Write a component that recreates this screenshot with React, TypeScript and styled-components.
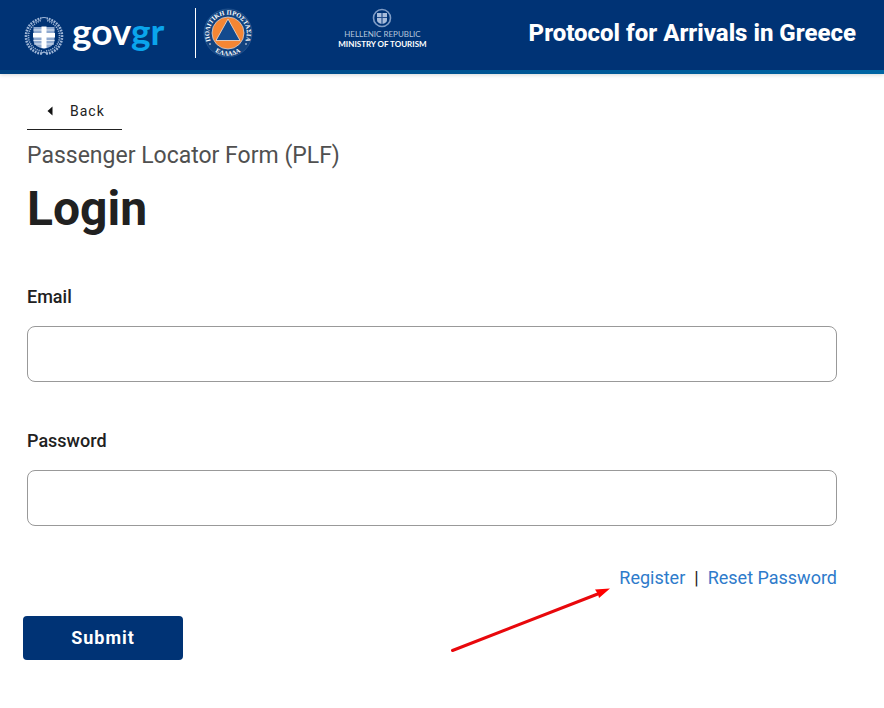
import React from "react";
import styled, { createGlobalStyle } from "styled-components";

const navy = "#003375";

const GlobalStyle = createGlobalStyle`
  *, *::before, *::after { box-sizing: border-box; }
  body {
    margin: 0;
    background: #fff;
    color: #212121;
    font-family: Roboto, "Liberation Sans", sans-serif;
  }
`;

const Header = styled.header`
  display: flex;
  align-items: flex-start;
  padding: 8px 28px 10px 24px;
  background: linear-gradient(90deg, #00417f, #0065a3) bottom / 100% 4px no-repeat ${navy};
  box-shadow: 0 1px 4px rgba(0, 0, 0, 0.16);
`;

const GovBrand = styled.a`
  display: flex;
  align-items: center;
  gap: 8px;
  height: 56px;
  color: #fff;
  text-decoration: none;
`;

const Wordmark = styled.span`
  padding-bottom: 10px;
  font: 700 37px/40px Lato, sans-serif;
`;

const WordmarkAccent = styled.span`
  color: #0aa5ec;
`;

const Divider = styled.span`
  width: 1px;
  height: 50px;
  margin: 0 7px 0 31px;
  background: #fff;
`;

const Ministry = styled.div`
  display: flex;
  flex-direction: column;
  align-items: center;
  margin-left: 85px;
  color: #fff;
  font: 400 8px/10px Lato, sans-serif;
  white-space: nowrap;
`;

const Republic = styled.span`
  color: #b4c4dc;
  line-height: 12px;
`;

const MinistryName = styled.strong`
  font-weight: 700;
  line-height: 8px;
`;

const SiteTitle = styled.div`
  margin-left: auto;
  color: #fff;
  font-size: 24px;
  font-weight: 800;
  line-height: 50px;
  white-space: nowrap;
`;

const Main = styled.main`
  padding: 20px 47px 48px 27px;
`;

const BackButton = styled.button`
  display: flex;
  align-items: center;
  gap: 17px;
  height: 36px;
  padding: 0 17px 2px 20px;
  border: 0;
  border-bottom: 1px solid #212121;
  background: none;
  color: #212121;
  font: 400 14px/20px Roboto, sans-serif;
  letter-spacing: 1px;
`;

const Caption = styled.p`
  margin: 10px 0 0;
  color: #505050;
  font-size: 23px;
  line-height: 32px;
`;

const Title = styled.h1`
  margin: 7px 0 44px;
  font-size: 48px;
  font-weight: 700;
  line-height: 60px;
`;

const Fields = styled.div`
  display: flex;
  flex-direction: column;
  gap: 45px;
  margin-bottom: 38px;
`;

const Field = styled.div`
  display: flex;
  flex-direction: column;
  gap: 16px;
`;

const Label = styled.label`
  font-size: 18px;
  font-weight: 500;
  line-height: 27px;
`;

const Input = styled.input`
  width: 100%;
  height: 56px;
  padding: 0 16px;
  border: 1px solid #999;
  border-radius: 8px;
  background: #fff;
  font: 400 18px/28px Roboto, sans-serif;
`;

const Links = styled.nav`
  position: relative;
  display: flex;
  justify-content: flex-end;
  gap: 9px;
  margin-bottom: 24px;
  font-size: 18px;
  line-height: 28px;
`;

const TextLink = styled.a`
  color: #2e7bcb;
  text-decoration: none;
`;

const Arrow = styled.svg`
  position: absolute;
  top: 20px;
  right: 225px;
`;

const Submit = styled.button`
  display: block;
  width: 160px;
  height: 44px;
  margin-left: -4px;
  border: 0;
  border-radius: 4px;
  background: ${navy};
  color: #fff;
  font: 700 18px/24px Roboto, sans-serif;
  letter-spacing: 1px;
`;

function Emblem() {
  return (
    <svg width="40" height="40" viewBox="0 0 40 40" aria-hidden="true">
      <g fill="none" stroke="#9db5d6">
        <path
          d="M18 37.500C8 37 2 29 2 20.500S7 5 17 2.500M22 37.500C32 37 38 29 38 20.500S33 5 23 2.500"
          strokeWidth="2.600"
          strokeDasharray="1.800 1"
        />
        <path
          d="M18 35C9.500 34 4.500 27.500 4.500 20.500S9 7.500 17 4.500M22 35c8.500-1 13.500-7.500 13.500-14.500S31 7.500 23 4.500"
          strokeWidth="1.600"
          strokeDasharray="1.200 1"
        />
        <path d="M16 2.500q4-2 8 0M16 38l4-2 4 2" strokeWidth="1.200" />
      </g>
      <path d="M9.500 11h21v14q0 5-10.500 8Q9.500 30 9.500 25z" fill="#8fa9cf" />
      <path d="M9.500 14h21M9.500 24.500h21M10 28h20" stroke="#dfe8f4" strokeWidth="1" />
      <path d="M17.500 10.500h5V17H31v4.500h-8.500V32h-5V21.500H9V17h8.500z" fill="#fff" />
    </svg>
  );
}

function SmallEmblem() {
  return (
    <svg width="20" height="20" viewBox="0 0 20 20" aria-hidden="true">
      <circle cx="10" cy="10" r="8.500" fill="none" stroke="#7f9cc5" strokeWidth="1.600" />
      <path d="M5 5h10v7q0 3-5 4-5-1-5-4z" fill="#a9bddb" />
      <path d="M10 5v11M5 9.500h10" stroke="#254f8c" strokeWidth="1.200" />
    </svg>
  );
}

function CivilProtectionLogo() {
  return (
    <svg width="50" height="50" viewBox="0 0 50 50" role="img" aria-label="Πολιτική Προστασία Ελλάδα">
      <defs>
        <path id="upper-arc" d="M8 33.500A18.800 18.800 0 1 1 42 33.500" />
        <path id="lower-arc" d="M7 39A23 23 0 0 0 43 39" />
      </defs>
      <circle cx="25" cy="25" r="24" fill="#12437f" stroke="#315f98" strokeWidth="0.600" />
      <circle cx="25" cy="25" r="16" fill="#f58634" stroke="#c9cdd8" strokeWidth="0.800" />
      <path d="M25 11 37 32.500H13z" fill="#134a8e" stroke="#f3dfd2" strokeWidth="0.800" />
      <g fill="#fff" fontFamily="Liberation Serif, serif" fontSize="6.500" fontWeight="700" textAnchor="middle">
        <text><textPath href="#upper-arc" startOffset="50%">ΠΟΛΙΤΙΚΗ ΠΡΟΣΤΑΣΙΑ</textPath></text>
        <text><textPath href="#lower-arc" startOffset="50%">ΕΛΛΑΔΑ</textPath></text>
      </g>
      <circle cx="7" cy="36" r="0.800" fill="#fff" />
      <circle cx="43" cy="36" r="0.800" fill="#fff" />
    </svg>
  );
}

export default function App() {
  return (
    <>
      <GlobalStyle />
      <Header>
        <GovBrand href="#home">
          <Emblem />
          <Wordmark>gov<WordmarkAccent>gr</WordmarkAccent></Wordmark>
        </GovBrand>
        <Divider />
        <CivilProtectionLogo />
        <Ministry>
          <SmallEmblem />
          <Republic>HELLENIC REPUBLIC</Republic>
          <MinistryName>MINISTRY OF TOURISM</MinistryName>
        </Ministry>
        <SiteTitle>Protocol for Arrivals in Greece</SiteTitle>
      </Header>
      <Main>
        <BackButton type="button">
          <svg width="6" height="10" viewBox="0 0 6 10" aria-hidden="true">
            <path d="M5.500 0.500v9L0.500 5z" fill="#111" />
          </svg>
          Back
        </BackButton>
        <Caption>Passenger Locator Form (PLF)</Caption>
        <Title>Login</Title>
        <form onSubmit={(event) => event.preventDefault()}>
          <Fields>
            <Field>
              <Label htmlFor="email">Email</Label>
              <Input id="email" type="email" />
            </Field>
            <Field>
              <Label htmlFor="password">Password</Label>
              <Input id="password" type="password" />
            </Field>
          </Fields>
          <Links>
            <TextLink href="#register">Register</TextLink>
            <span>|</span>
            <TextLink href="#reset">Reset Password</TextLink>
            <Arrow width="162" height="70" viewBox="0 0 162 70" aria-hidden="true">
              <path d="M2.500 66.500 149 9.500" stroke="#e8080c" strokeWidth="3" strokeLinecap="round" />
              <path d="M160 4.500 145 5.500l3 4.500 1 4z" fill="#f00" />
            </Arrow>
          </Links>
          <Submit type="submit">Submit</Submit>
        </form>
      </Main>
    </>
  );
}
